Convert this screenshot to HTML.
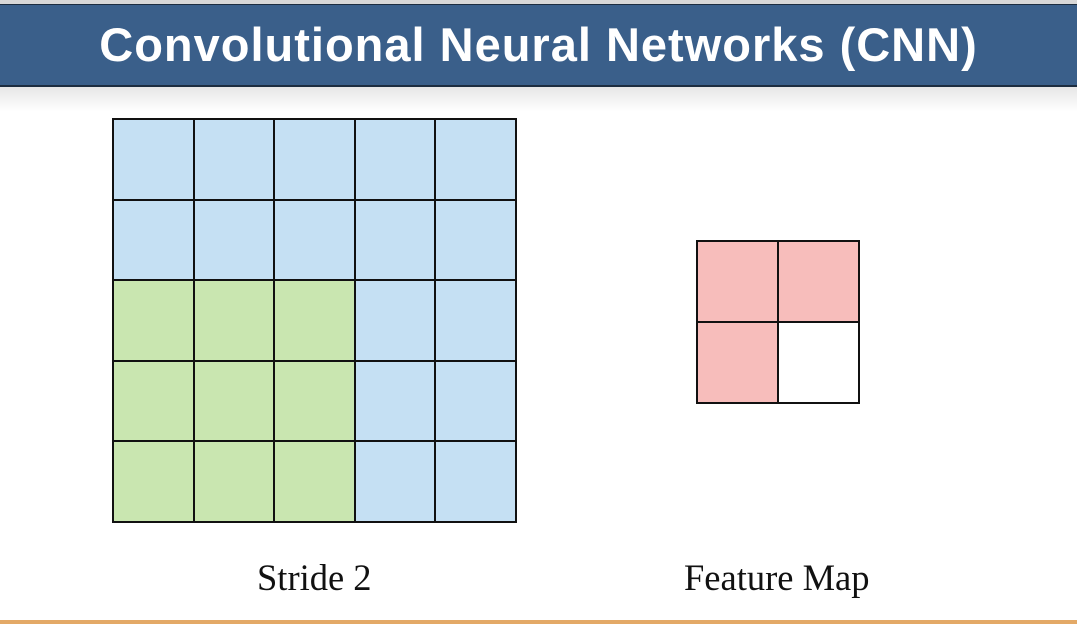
<!DOCTYPE html>
<html><head><style>
body{margin:0;width:1077px;height:624px;position:relative;background:#fff;overflow:hidden}
.top{position:absolute;left:0;top:0;width:1077px;height:4px;background:#d8d8d8}
.band{position:absolute;left:0;top:4px;width:1077px;height:83px;background:#3a5f8a;border-top:1px solid #1d2d40;border-bottom:2px solid #1d2d40;box-sizing:border-box}
.shadow{position:absolute;left:0;top:87px;width:1077px;height:25px;background:linear-gradient(#e6e6e6,#fff)}
h1{position:absolute;left:0;top:21px;width:1077px;margin:0;text-align:center;color:#fff;font:bold 47px/47px "Liberation Sans",sans-serif;letter-spacing:1px}
.g{position:absolute;border-collapse:collapse}
.g td{border:2px solid #111;padding:0}
.b{background:#c5e0f3}.gr{background:#c9e6b0}.r{background:#f7bdbb}.w{background:#fff}
.lbl{position:absolute;font:36.5px/40px "Liberation Serif",serif;color:#111}
.bot{position:absolute;left:0;top:620px;width:1077px;height:4px;background:#e3a967}
</style></head><body>
<div class="top"></div>
<div class="band"></div>
<div class="shadow"></div>
<h1>Convolutional Neural Networks (CNN)</h1>
<table class="g" style="left:112px;top:118px">
<tr><td class="b" style="width:78.6px;height:78.6px"></td><td class="b" style="width:78.6px"></td><td class="b" style="width:78.6px"></td><td class="b" style="width:78.6px"></td><td class="b" style="width:78.6px"></td></tr>
<tr><td class="b" style="height:78.6px"></td><td class="b"></td><td class="b"></td><td class="b"></td><td class="b"></td></tr>
<tr><td class="gr" style="height:78.6px"></td><td class="gr"></td><td class="gr"></td><td class="b"></td><td class="b"></td></tr>
<tr><td class="gr" style="height:78.6px"></td><td class="gr"></td><td class="gr"></td><td class="b"></td><td class="b"></td></tr>
<tr><td class="gr" style="height:78.6px"></td><td class="gr"></td><td class="gr"></td><td class="b"></td><td class="b"></td></tr>
</table>
<table class="g" style="left:696px;top:240px">
<tr><td class="r" style="width:79px;height:79px"></td><td class="r" style="width:79px"></td></tr>
<tr><td class="r" style="height:79px"></td><td class="w"></td></tr>
</table>
<div class="lbl" style="left:257px;top:558px">Stride 2</div>
<div class="lbl" style="left:684px;top:558px">Feature Map</div>
<div class="bot"></div>
</body></html>
